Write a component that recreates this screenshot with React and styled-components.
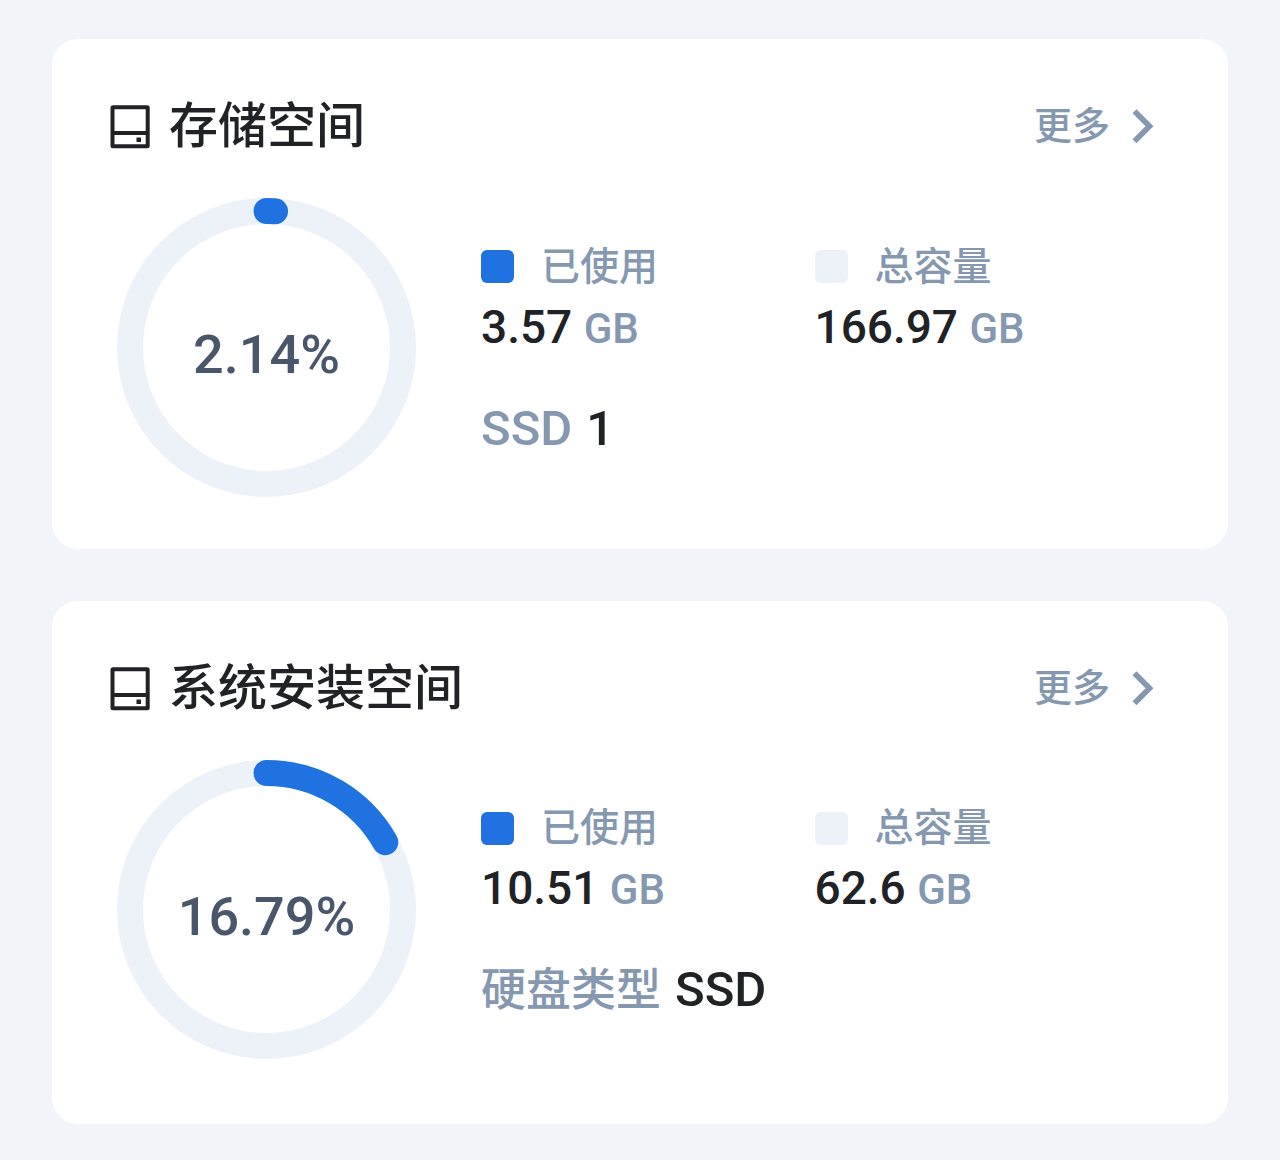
import React from "react";
import styled, { createGlobalStyle } from "styled-components";

const GlobalStyle = createGlobalStyle`
  *, *::before, *::after { box-sizing: border-box; }
  body {
    margin: 0;
    background: #f3f4f9;
    color: #212226;
    font-family: Roboto, "Noto Sans CJK SC", sans-serif;
    font-weight: 500;
  }
`;

const Page = styled.main`
  display: flex;
  flex-direction: column;
  gap: 52px;
  padding: 39px 52px 36px;
`;

const Card = styled.section`
  padding: 52px 0 ${(p) => (p.$roomy ? 65 : 52)}px;
  border-radius: 26px;
  background: #ffffff;
`;

const Header = styled.header`
  display: flex;
  align-items: center;
  justify-content: space-between;
  height: 70px;
  padding: 0 58px;
`;

const Heading = styled.div`
  display: flex;
  align-items: center;
  gap: 19px;
`;

const Title = styled.h2`
  margin: 0;
  padding-top: 2px;
  font-size: 49px;
  font-weight: 500;
  line-height: 70px;
`;

const MoreLink = styled.a`
  display: flex;
  align-items: center;
  gap: 6px;
  color: #8698b0;
  font-size: 38px;
  line-height: 70px;
  text-decoration: none;
`;

const Icon = styled.svg`
  display: block;
  flex: none;
`;

const Body = styled.div`
  display: flex;
  align-items: center;
  gap: 65px;
  padding: 37px 80px 0 65px;
`;

const Gauge = styled.div`
  display: grid;
  place-items: center;
  flex: none;

  > * { grid-area: 1 / 1; }
`;

const Percent = styled.span`
  padding-top: 14px;
  color: #4a566a;
  font-size: 54px;
  line-height: 64px;
`;

const Details = styled.div`
  flex: 1;
  display: flex;
  flex-direction: column;
  gap: 40px;
`;

const Stats = styled.dl`
  display: grid;
  grid-template-columns: 1fr 1fr;
  margin: 0;
`;

const Label = styled.dt`
  display: flex;
  align-items: center;
  gap: 27px;
  color: #8698b0;
  font-size: 39px;
  line-height: 60px;
`;

const Swatch = styled.span`
  width: 33px;
  height: 33px;
  border-radius: 6px;
  background: ${(p) => p.$color};
`;

const Value = styled.dd`
  margin: 0;
  font-size: 46px;
  line-height: 60px;
  white-space: nowrap;
`;

const Unit = styled.span`
  color: #8698b0;
  font-size: 42px;
`;

const DriveLine = styled.p`
  display: flex;
  align-items: baseline;
  gap: 14px;
  margin: 0;
  font-size: 49px;
  line-height: 60px;
`;

const DriveLabel = styled.span`
  color: #8698b0;
  font-size: ${(p) => (p.$cjk ? 45 : 49)}px;
`;

const BLUE = "#1f72df";
const TRACK = "#edf1f8";

function DriveIcon() {
  return (
    <Icon width="40" height="46" viewBox="0 0 40 46" fill="none" aria-hidden="true">
      <rect x="2.5" y="4.2" width="35.2" height="39" rx=".5" stroke="#212226" strokeWidth="4" strokeLinejoin="round" />
      <path d="M2.5 30H37.5" stroke="#212226" strokeWidth="4" />
      <rect x="26.5" y="34.5" width="4.5" height="4.5" fill="#212226" />
    </Icon>
  );
}

function ChevronIcon() {
  return (
    <Icon width="54" height="44" viewBox="0 0 54 44" fill="none" aria-hidden="true">
      <path d="M18.5 7.3L33.5 22.3L18.5 37.3" stroke="#8698b0" strokeWidth="5.6" />
    </Icon>
  );
}

function Ring({ percent }) {
  const radius = 136.5;
  return (
    <svg width="299" height="299" viewBox="0 0 299 299" fill="none" aria-hidden="true">
      <circle cx="149.5" cy="149.5" r={radius} stroke={TRACK} strokeWidth="26" />
      <circle
        cx="149.5"
        cy="149.5"
        r={radius}
        stroke={BLUE}
        strokeWidth="26"
        strokeLinecap="round"
        pathLength="100"
        strokeDasharray={`${percent} 200`}
        transform="rotate(-90 149.5 149.5)"
      />
    </svg>
  );
}

function Stat({ label, color, amount }) {
  return (
    <div>
      <Label>
        <Swatch $color={color} />
        {label}
      </Label>
      <Value>
        {amount} <Unit>GB</Unit>
      </Value>
    </div>
  );
}

function StorageCard({ title, percent, arc, used, total, driveLabel, driveValue, cjk }) {
  return (
    <Card $roomy={cjk}>
      <Header>
        <Heading>
          <DriveIcon />
          <Title>{title}</Title>
        </Heading>
        <MoreLink href="#">
          更多
          <ChevronIcon />
        </MoreLink>
      </Header>
      <Body>
        <Gauge>
          <Ring percent={arc} />
          <Percent>{percent}%</Percent>
        </Gauge>
        <Details>
          <Stats>
            <Stat label="已使用" color={BLUE} amount={used} />
            <Stat label="总容量" color={TRACK} amount={total} />
          </Stats>
          <DriveLine>
            <DriveLabel $cjk={cjk}>{driveLabel}</DriveLabel>
            <span>{driveValue}</span>
          </DriveLine>
        </Details>
      </Body>
    </Card>
  );
}

export default function App() {
  return (
    <>
      <GlobalStyle />
      <Page>
        <StorageCard
          title="存储空间"
          percent="2.14"
          arc={1}
          used="3.57"
          total="166.97"
          driveLabel="SSD"
          driveValue="1"
        />
        <StorageCard
          title="系统安装空间"
          percent="16.79"
          arc={16.79}
          used="10.51"
          total="62.6"
          driveLabel="硬盘类型"
          driveValue="SSD"
          cjk
        />
      </Page>
    </>
  );
}
